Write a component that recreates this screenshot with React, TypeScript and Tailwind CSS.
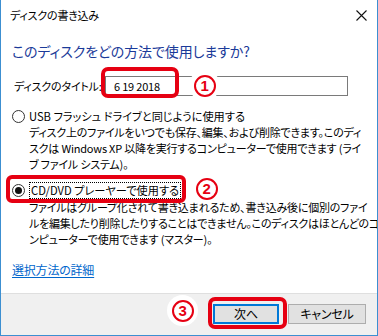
import React from "react";

const JP = "font-['Noto_Sans_CJK_JP','Noto_Sans',sans-serif] [font-feature-settings:'palt']";

function Marker({ n }: { n: string }) {
  return (
    <div className="w-[31px] h-[31px] rounded-full bg-white flex items-center justify-center">
      <div className="w-[22px] h-[22px] rounded-full border-[2.5px] border-[#e60012] text-[#e60012] font-bold text-[15px] leading-none flex items-center justify-center font-['Liberation_Sans',sans-serif]">
        {n}
      </div>
    </div>
  );
}

function Radio({ checked }: { checked?: boolean }) {
  return (
    <span className="w-[13px] h-[13px] rounded-full border border-[#333] bg-white flex items-center justify-center shrink-0">
      {checked && <span className="w-[7px] h-[7px] rounded-full bg-[#111]" />}
    </span>
  );
}

export default function App() {
  return (
    <div
      className={`relative w-[378px] h-[336px] bg-white border-x border-b border-[#3c8fd1] flex flex-col overflow-hidden text-[11px] tracking-[-0.2px] whitespace-nowrap text-black ${JP}`}
    >
      {/* title bar */}
      <div className="h-[31px] flex items-center justify-between pl-[9px] pr-[10px] shrink-0">
        <span className="text-[11px]">ディスクの書き込み</span>
        <svg width="11" height="11" viewBox="0 0 11 11">
          <path d="M0.5 0.5 L10.5 10.5 M10.5 0.5 L0.5 10.5" stroke="#111" strokeWidth="1.1" />
        </svg>
      </div>

      {/* body */}
      <div className="flex-1 pl-[11px]">
        <h1 className="mt-[10px] text-[14px] tracking-[-0.1px] leading-[20px] text-[#1a3a99] font-normal">
          このディスクをどの方法で使用しますか?
        </h1>

        <div className="mt-[15px] h-[20px] flex items-center">
          <span className="w-[93px] pl-[2px]">ディスクのタイトル:</span>
          <div className="relative w-[243px] h-[20px] border border-[#7a7a7a] flex items-center pl-[8px]">
            6 19 2018
            <div className="absolute left-[-5px] top-[-10px] w-[78px] h-[31px] border-[4px] border-[#e60012] rounded-[7px]" />
            <div className="absolute left-[83px] top-[-7px]">
              <Marker n="1" />
            </div>
          </div>
        </div>

        <div className="mt-[12px] h-[16px] flex items-center gap-[4px]">
          <Radio />
          <span className="text-[11.2px] tracking-[0px] text-black">USB フラッシュ ドライブと同じように使用する</span>
        </div>
        <div className="w-max pl-[17px] leading-[16px]">
          <div>ディスク上のファイルをいつでも保存、編集、および削除できます。このディ</div>
          <div>スクは Windows XP 以降を実行するコンピューターで使用できます (ライ</div>
          <div>ブ ファイル システム)。</div>
        </div>

        <div className="mt-[10px] h-[16px] flex items-center gap-[4px]">
          <Radio checked />
          <span className="text-[11.2px] tracking-[0px] border border-dotted border-black px-[1px] leading-[15px]">
            CD/DVD プレーヤーで使用する
          </span>
        </div>
        <div className="w-max mt-[1px] pl-[17px] leading-[16px]">
          <div>ファイルはグループ化されて書き込まれるため、書き込み後に個別のファイ</div>
          <div className="tracking-[-0.25px]">ルを編集したり削除したりすることはできません。このディスクはほとんどのコ</div>
          <div>ンピューターで使用できます (マスター)。</div>
        </div>

        <div className="mt-[15px] leading-[16px]">
          <span className="text-[12px] text-[#0066cc] underline underline-offset-2">選択方法の詳細</span>
        </div>
      </div>

      {/* footer */}
      <div className="h-[42px] shrink-0 bg-[#f0f0f0] border-t border-[#dfdfdf] flex items-start justify-end pt-[10px] pr-[11px] gap-[9px]">
        <button className="w-[66px] h-[20px] bg-[#e1e1e1] border-2 border-[#0078d7] text-[12px] leading-none">
          次へ
        </button>
        <button className="w-[78px] h-[20px] bg-[#e1e1e1] border border-[#adadad] text-[12px] leading-none">
          キャンセル
        </button>
      </div>

      {/* annotations */}
      <div className="absolute left-[5px] top-[175px] w-[180px] h-[28px] border-[4px] border-[#e60012] rounded-[6px]" />
      <div className="absolute left-[190px] top-[173px]">
        <Marker n="2" />
      </div>
      <div className="absolute left-[207px] top-[297px] w-[79px] h-[32px] border-[4px] border-[#e60012] rounded-[7px]" />
      <div className="absolute left-[166px] top-[295px]">
        <Marker n="3" />
      </div>
    </div>
  );
}
